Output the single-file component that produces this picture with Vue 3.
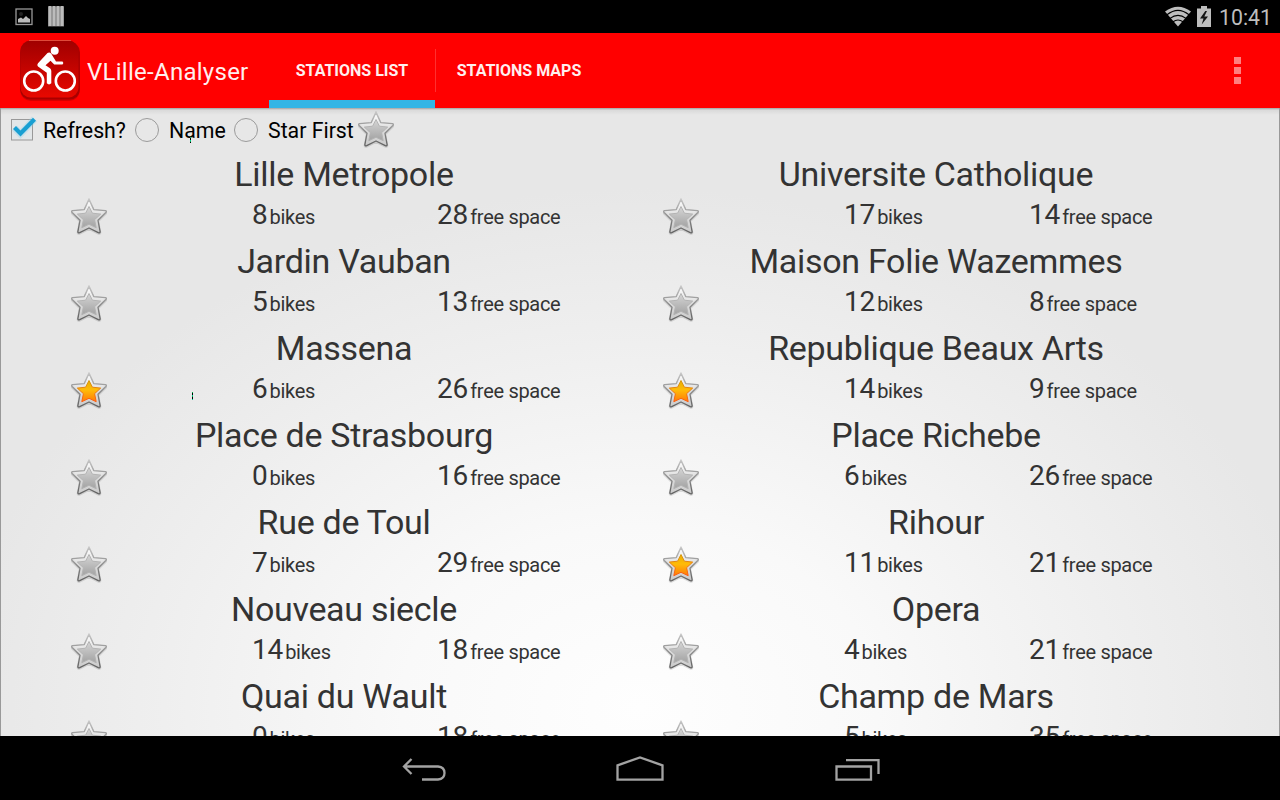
<script setup>
import { h } from 'vue'

const stations = [
  ['Lille Metropole', 8, 28, false], ['Universite Catholique', 17, 14, false],
  ['Jardin Vauban', 5, 13, false], ['Maison Folie Wazemmes', 12, 8, false],
  ['Massena', 6, 26, true], ['Republique Beaux Arts', 14, 9, true],
  ['Place de Strasbourg', 0, 16, false], ['Place Richebe', 6, 26, false],
  ['Rue de Toul', 7, 29, false], ['Rihour', 11, 21, true],
  ['Nouveau siecle', 14, 18, false], ['Opera', 4, 21, false],
  ['Quai du Wault', 0, 18, false], ['Champ de Mars', 5, 35, false],
]

const outer = 'M18 1.5L22.7 11.6 34.5 12.7Q36 13.2 34.8 14.5L27 22.3 29.1 33.5Q29.2 35.3 27.3 34.7L18 30 8.7 34.7Q6.8 35.3 6.9 33.5L9 22.3 1.2 14.5Q0 13.2 1.5 12.7L13.3 11.6Z'
const inner = 'M18 8.5L21.4 15.2 29.7 16.1 23.6 21.7 25.2 29.7 18 26.3 10.8 29.7 12.4 21.7 6.3 16.1 14.6 15.2Z'

const StarIcon = (props) =>
  h('svg', { width: 36, height: 37, viewBox: '0 0 36 37' }, [
    h('path', { d: outer, fill: 'none', stroke: '#000', 'stroke-opacity': 0.12, 'stroke-width': 2.4, transform: 'translate(0 .8)' }),
    h('path', { d: outer, fill: 'url(#rim)', stroke: 'url(#edge)', 'stroke-width': 1.3, 'stroke-linejoin': 'round' }),
    h('path', { d: inner, fill: props.on ? 'url(#gold)' : 'url(#grey)', stroke: props.on ? 'url(#goldEdge)' : 'url(#greyEdge)', 'stroke-width': 1 }),
  ])
StarIcon.props = ['on']
</script>

<template>
  <div class="screen">
    <svg class="defs" width="0" height="0">
      <defs>
        <linearGradient id="rim" x1="0" y1="0" x2="0" y2="1"><stop offset="0" stop-color="#fff" /><stop offset=".5" stop-color="#dedede" /><stop offset="1" stop-color="#cacaca" /></linearGradient>
        <linearGradient id="edge" x1="0" y1="0" x2="0" y2="1"><stop offset="0" stop-color="#c4c4c4" /><stop offset=".5" stop-color="#8e8e8e" /><stop offset="1" stop-color="#606060" /></linearGradient>
        <linearGradient id="grey" x1="0" y1="0" x2="0" y2="1"><stop offset="0" stop-color="#d6d6d6" /><stop offset="1" stop-color="#a2a2a2" /></linearGradient>
        <linearGradient id="greyEdge" x1="0" y1="0" x2="0" y2="1"><stop offset="0" stop-color="#b4b4b4" /><stop offset="1" stop-color="#b2b2b2" /></linearGradient>
        <linearGradient id="gold" x1="0" y1="0" x2="0" y2="1"><stop offset="0" stop-color="#e6b000" /><stop offset=".45" stop-color="#ffbb08" /><stop offset="1" stop-color="#ff7a08" /></linearGradient>
        <linearGradient id="goldEdge" x1="0" y1="0" x2="0" y2="1"><stop offset="0" stop-color="#d69a10" /><stop offset="1" stop-color="#ff5a10" /></linearGradient>
        <linearGradient id="logo" x1="0" y1="0" x2="0" y2="1"><stop offset="0" stop-color="#a00000" /><stop offset="1" stop-color="#e80800" /></linearGradient>
      </defs>
    </svg>

    <header class="status">
      <svg class="pic" width="18" height="18" viewBox="0 0 18 18"><rect x="1" y="1" width="16" height="15.5" fill="none" stroke="#999" stroke-width="1.3" /><circle cx="6" cy="6" r="2" fill="#222" /><path d="M3 14.5V11l3-1.5 2 1.5 3-3 2 2 2 1v3.5z" fill="#bbb" /></svg>
      <svg class="bars" width="16" height="21" viewBox="0 0 16 21"><path d="M0 .5h16v20H0z" fill="#777" /><path d="M.5 0h3v20h-3zM4.5 0h3v20h-3zM8.5 0h3v20h-3zM12.5 0h3v20h-3z" fill="#bcbcbc" /></svg>
      <span class="grow"></span>
      <svg class="wifi" width="26" height="21" viewBox="0 0 26 21"><path d="M0 5.5Q13-4 26 5.5L13 20.500z" fill="#bebebe" /><path d="M2 8.800Q13 0 24 8.800M5 12.400q8-6 16 0M8 15.800q5-3.500 10 0" fill="none" stroke="#000" stroke-width="1.100" /></svg>
      <svg class="battery" width="14" height="21" viewBox="0 0 14 21"><path d="M4 0h6v2.500h4V21H0V2.500h4z" fill="#bebebe" /><path d="M8.300 5L3 12.500h3.500L4.700 18.500 11 10.500H7.300L10 5z" fill="#151515" /></svg>
      <span class="clock">10:41</span>
    </header>

    <nav class="bar">
      <svg class="logo" width="62" height="64" viewBox="0 0 62 64">
        <rect x="1.500" y="4" width="59" height="58" rx="10" fill="#700" opacity=".3" />
        <rect x="1" y="3" width="60" height="57.500" rx="10" fill="#900" opacity=".75" />
        <rect x="1.500" y="1.500" width="58" height="57" rx="10" fill="url(#logo)" />
        <path d="M10 1.500h42" stroke="#e04a3a" stroke-width="1" />
        <g fill="none" stroke="#fff" stroke-width="2.600"><circle cx="14.700" cy="42" r="9.500" /><circle cx="46.300" cy="42" r="9.500" /></g>
        <circle cx="35.700" cy="11.800" r="4" fill="#fff" />
        <path d="M28.500 14q2-1.500 3.800.8L37 22.400h6.500q1.800 1.400 0 3h-8.300L31.500 21.800 26.500 26.300 31 29.300q1.300 1 1.300 2.800V44.300q-2.300 2.200-4.500 0V33.800L19 27.600q-1.500-1.700 0-3.400z" fill="#fff" />
      </svg>
      <span class="title">VLille-Analyser</span>
      <div class="tab active">STATIONS LIST</div>
      <div class="divider"></div>
      <div class="tab second">STATIONS MAPS</div>
      <span class="grow"></span>
      <div class="menu"><i></i><i></i><i></i></div>
    </nav>

    <main class="content">
      <div class="filters">
        <svg class="check" width="28" height="28" viewBox="0 0 28 28"><rect x="1.500" y="3.500" width="21" height="20.500" fill="#e2e6e8" stroke="#999" stroke-width="1" /><path d="M4.500 12l6 6L24.500 3" fill="none" stroke="#7fd0ee" stroke-width="7" opacity=".3" /><path d="M4.500 11.500l6 6L24.500 3.200" fill="none" stroke="#189fd2" stroke-width="4.200" /></svg>
        <span class="refresh">Refresh?</span>
        <i class="radio"></i><span class="name-opt">Name</span>
        <i class="radio"></i><span class="star-opt">Star First</span>
        <StarIcon class="filter-star" :on="false" />
      </div>
      <div class="grid">
        <div v-for="s in stations" :key="s[0]" class="station">
          <h2>{{ s[0] }}</h2>
          <div class="details">
            <div class="star"><StarIcon :on="s[3]" /></div>
            <div class="bikes"><b>{{ s[1] }}</b><span>bikes</span></div>
            <div class="free"><b>{{ s[2] }}</b><span>free space</span></div>
          </div>
        </div>
      </div>
      <i class="speck one"></i><i class="speck two"></i>
    </main>

    <footer class="system">
      <svg width="500" height="60" viewBox="390 740 500 60" fill="none" stroke="#a3a3a3" stroke-width="2.300">
        <path d="M411.500 759l-7.500 7.500 7.500 7.500M404 766.500h34q6.500.5 6.500 6.500t-6.500 6.500h-16" />
        <path d="M617.500 765.300l22.500-7.800 22.500 7.800v14.400h-45z" />
        <path d="M836.500 766.500H871v13.200h-34.500zM846 760.200h32.500V774" />
      </svg>
    </footer>
  </div>
</template>

<style>
body { margin: 0; overflow: hidden; }
</style>

<style scoped>
.screen { width: 1280px; height: 800px; display: flex; flex-direction: column; background: #000; font-family: Roboto, sans-serif; overflow: hidden; }
.defs { position: absolute; }
.grow { flex: 1; }
.status { height: 33px; flex: none; display: flex; align-items: center; box-sizing: border-box; padding: 0 10px 0 15px; }
.status svg { flex: none; }
.bars { margin-left: 15px; }
.wifi { margin: 0 6px 1px 0; }
.battery { margin: 0 8px 1px 0; }
.clock { color: #bebebe; font-size: 21.300px; width: 51px; white-space: nowrap; line-height: 33px; padding-top: 2px; }
.bar { height: 75px; flex: none; display: flex; background: #f00; color: #fff; }
.logo { margin: 6px 0 0 19px; flex: none; }
.title { width: 182px; padding-left: 6px; box-sizing: border-box; font-size: 24px; letter-spacing: .27px; line-height: 78px; height: 75px; color: #ffefef; white-space: nowrap; }
.tab { width: 166px; height: 75px; margin-left: 6px; text-align: center; font-size: 16px; line-height: 76px; font-weight: 700; color: #ffefef; box-sizing: border-box; white-space: nowrap; }
.active { border-bottom: 8px solid #33b5e5; }
.divider { width: 1px; height: 43px; margin-top: 16px; background: #ff2f2f; }
.second { margin-left: 0; }
.menu { margin: 24px 39px 0 0; display: flex; flex-direction: column; gap: 3px; }
.menu i { width: 7px; height: 7px; background: #ff8080; }
.content { position: relative; height: 628px; flex: none; overflow: hidden; box-sizing: border-box; border-left: 1px solid #999; border-right: 1px solid #999; background: linear-gradient(#0000004d, #0000000f 2px, transparent 7px), radial-gradient(ellipse 680px 520px at 639px 600px, #fefefe, #f9f9f9 35%, #efefef 70%, #e7e7e7); }
.filters { height: 44px; display: flex; align-items: center; color: #000; font-size: 21.300px; padding-left: 9px; white-space: nowrap; line-height: 44px; }
.filters span { padding-top: 1px; box-sizing: border-box; }
.check { margin-right: 5px; }
.refresh { width: 92px; }
.radio { box-sizing: border-box; width: 24px; height: 24px; border: 1.500px solid #9b9b9b; border-radius: 50%; margin-bottom: 1px; }
.name-opt { width: 75px; padding-left: 10px; }
.filters .star-opt { width: 100px; padding-left: 10px; }
.filter-star { margin-bottom: 1px; }
.grid { display: grid; grid-template-columns: 592px 592px; grid-auto-rows: 87px; margin-left: 47px; }
h2 { margin: 0; height: 44px; line-height: 44px; font-size: 34px; letter-spacing: -.3px; font-weight: 400; color: #333; text-align: center; white-space: nowrap; }
.details { display: grid; grid-template-columns: 204px 185px 203px; height: 43px; color: #333; white-space: nowrap; line-height: 38px; }
.star { padding: 2px 0 0 23px; display: flex; }
.details b { font-size: 28px; font-weight: 400; letter-spacing: -.15px; }
.details span { font-size: 20px; letter-spacing: -.3px; margin-left: 2px; }
.speck { position: absolute; width: 1px; background: repeating-linear-gradient(#00b050 0 1px, #000 1px 3px, #0c9 3px 4px); }
.one { left: 189px; top: 29px; height: 6px; }
.two { left: 191px; top: 284px; height: 8px; }
.system { height: 64px; display: flex; justify-content: center; align-items: flex-start; padding-top: 4px; box-sizing: border-box; }
</style>
